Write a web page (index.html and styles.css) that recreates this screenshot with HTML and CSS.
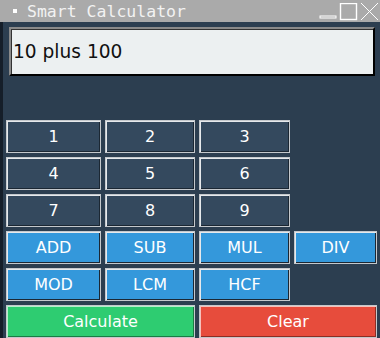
FILE: index.html
```html
<!DOCTYPE html>
<html lang="en">

<head>
    <meta charset="UTF-8">
    <meta name="viewport" content="width=device-width, initial-scale=1.0">
    <title>Smart Calculator</title>
    <link rel="stylesheet" href="styles.css">
</head>

<body>
    <div class="window">
        <div class="titlebar">
            <span class="bullet"></span>
            <span class="title">Smart Calculator</span>
            <div class="controls">
                <svg width="60" height="18" viewBox="0 0 60 18">
                    <rect x="1" y="13" width="16" height="2" fill="none" stroke="#fff" stroke-width="1"/>
                    <rect x="21.5" y="0.5" width="16" height="16" fill="none" stroke="#fff" stroke-width="1.4"/>
                    <path d="M42 0 L59 17 M59 0 L42 17" stroke="#fff" stroke-width="1"/>
                </svg>
            </div>
        </div>
        <div class="body">
            <div class="strip"></div>
            <div class="content">
                <div class="entry">10 plus 100</div>
                <div class="keypad">
                    <button class="num">1</button>
                    <button class="num">2</button>
                    <button class="num">3</button>
                    <span></span>
                    <button class="num">4</button>
                    <button class="num">5</button>
                    <button class="num">6</button>
                    <span></span>
                    <button class="num">7</button>
                    <button class="num">8</button>
                    <button class="num">9</button>
                    <span></span>
                    <button class="op">ADD</button>
                    <button class="op">SUB</button>
                    <button class="op">MUL</button>
                    <button class="op">DIV</button>
                    <button class="op">MOD</button>
                    <button class="op">LCM</button>
                    <button class="op">HCF</button>
                    <span></span>
                    <button class="calc wide">Calculate</button>
                    <button class="clear wide">Clear</button>
                </div>
            </div>
        </div>
    </div>
</body>

</html>
```

FILE: styles.css
```css
html, body {
    margin: 0;
    padding: 0;
    background: #2c3e50;
}

.window {
    width: 380px;
    height: 338px;
    display: flex;
    flex-direction: column;
    overflow: hidden;
}

.titlebar {
    height: 22px;
    background: #aaaaaa;
    display: flex;
    align-items: center;
    position: relative;
}

.bullet {
    width: 4px;
    height: 4px;
    background: #fff;
    margin-left: 13px;
    margin-right: 10px;
}

.title {
    font-family: "DejaVu Sans Mono", monospace;
    font-size: 16.5px;
    color: #f2f2f2;
    letter-spacing: 0px;
}

.controls {
    margin-left: auto;
    padding-top: 2px;
    margin-right: 1px;
}

.controls svg {
    display: block;
}

.body {
    flex: 1;
    display: flex;
}

.strip {
    width: 3px;
    background: #151e29;
}

.content {
    flex: 1;
    display: flex;
    flex-direction: column;
}

.entry {
    margin: 5px 5px 0 6px;
    height: 45px;
    background: #ecf0f1;
    border: 2px solid #000;
    border-top-color: #8a8a8a;
    border-left-color: #8a8a8a;
    box-shadow: inset 1px 1px 0 #333;
    font-family: "DejaVu Sans", sans-serif;
    font-size: 18.6px;
    color: #111;
    display: flex;
    align-items: center;
    padding-left: 2px;
    padding-top: 0;
}

.keypad {
    margin: 44px 0 0 3px;
    display: grid;
    grid-template-columns: 95px 90px 91px 83px;
    grid-auto-rows: 33px;
    gap: 4px;
}

.keypad button {
    margin: 0;
    padding: 0;
    font-family: "DejaVu Sans", sans-serif;
    font-size: 16px;
    color: #fff;
    border: 1px solid #c4c8cc;
    box-shadow: inset 1px 1px 0 #e6e9ec, inset -1px -1px 0 #1b2733;
}

.num {
    background: #34495e;
}

.op {
    background: #3498db;
    box-shadow: inset 1px 1px 0 #bfe0f5, inset -1px -1px 0 #1f5f8c;
}

.wide {
    grid-column: span 2;
}

.calc {
    background: #2ecc71;
}

.clear {
    background: #e74c3c;
}

.keypad .calc {
    box-shadow: inset 1px 1px 0 #b5f0cc, inset -1px -1px 0 #1b7a43;
}

.keypad .clear {
    box-shadow: inset 1px 1px 0 #f6c1bb, inset -1px -1px 0 #8b2d24;
}
```
